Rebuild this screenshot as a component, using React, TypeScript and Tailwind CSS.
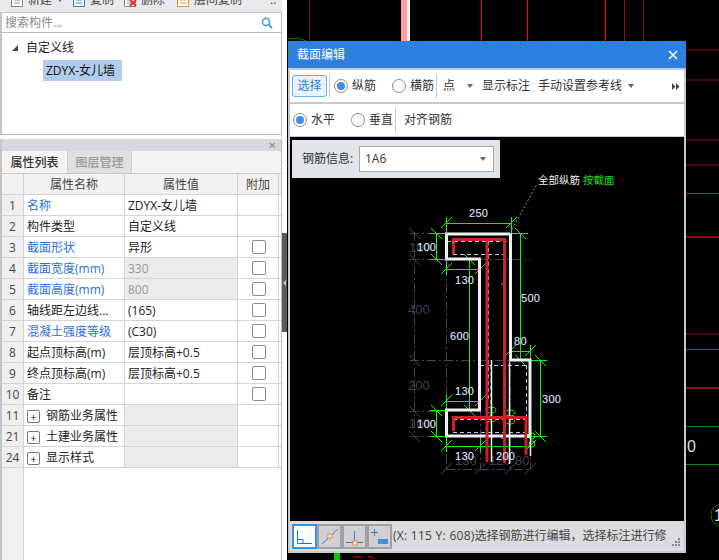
const uiFont = { fontFamily: '"Open Sans", "Noto Sans CJK SC", sans-serif' };

type Row = {
  no: string;
  name: string;
  value?: string;
  blue?: boolean;
  greyed?: boolean;
  check?: boolean;
  group?: boolean;
};

const rows: Row[] = [
  { no: "1", name: "名称", value: "ZDYX-女儿墙", blue: true },
  { no: "2", name: "构件类型", value: "自定义线" },
  { no: "3", name: "截面形状", value: "异形", blue: true, check: true },
  { no: "4", name: "截面宽度(mm)", value: "330", blue: true, greyed: true, check: true },
  { no: "5", name: "截面高度(mm)", value: "800", blue: true, greyed: true, check: true },
  { no: "6", name: "轴线距左边线...", value: "(165)", check: true },
  { no: "7", name: "混凝土强度等级", value: "(C30)", blue: true, check: true },
  { no: "8", name: "起点顶标高(m)", value: "层顶标高+0.5", check: true },
  { no: "9", name: "终点顶标高(m)", value: "层顶标高+0.5", check: true },
  { no: "10", name: "备注", check: true },
  { no: "11", name: "钢筋业务属性", group: true },
  { no: "21", name: "土建业务属性", group: true },
  { no: "24", name: "显示样式", group: true },
];

function Radio({ on }: { on?: boolean }) {
  return (
    <span className="w-[14px] h-[14px] rounded-full border border-[#8a8a8a] bg-white flex items-center justify-center shrink-0">
      {on && <span className="w-[8px] h-[8px] rounded-full bg-[#3d8ee8]" />}
    </span>
  );
}

function Caret({ className = "" }: { className?: string }) {
  return <span className={`w-0 h-0 border-x-[3px] border-x-transparent border-t-[4px] border-t-[#666] shrink-0 ${className}`} />;
}

function TopTool({ color, cross, w, label }: { color: string; cross?: boolean; w: number; label: string }) {
  return (
    <div className="flex items-center shrink-0" style={{ width: w }}>
      <svg width="14" height="18" viewBox="0 0 14 18" fill="none" className="shrink-0">
        <rect x="1.5" y="1.5" width="11" height="14" stroke={color} fill="#fff" />
        <path d="M4 6h6M4 9h6M4 12h6" stroke={color} />
        {cross && <path d="M7 9l6 6M13 9l-6 6" stroke="#d33" strokeWidth="2" />}
      </svg>
      <span className="ml-[4px] text-[#444]">{label}</span>
    </div>
  );
}

function PropertyRow({ row }: { row: Row }) {
  return (
    <div className="grid grid-cols-[22px_101px_113px_41px] h-[21px] border-b border-[#d4d4d4] text-[12px] leading-[18px]">
      <div className="bg-[#efefef] border-r border-[#d4d4d4] text-center text-[#444] pt-[2px]">{row.no}</div>
      <div className={`border-r border-[#d4d4d4] pl-[3px] pt-[2px] whitespace-nowrap overflow-hidden flex items-center ${row.blue ? "text-[#2f6fdd]" : "text-[#222]"}`}>
        {row.group && (
          <span className="w-[13px] h-[13px] border border-[#777] rounded-[2px] flex items-center justify-center text-[11px] leading-none mr-[6px] shrink-0">
            +
          </span>
        )}
        {row.name}
      </div>
      <div className={`border-r border-[#d4d4d4] pl-[3px] pt-[2px] whitespace-nowrap ${row.greyed ? "bg-[#ebebeb] text-[#999]" : row.group ? "bg-[#ebebeb]" : "text-[#222]"}`}>
        {row.value}
      </div>
      <div className="border-r border-[#d4d4d4] flex items-center justify-center pl-px">
        {row.check && <span className="w-[14px] h-[14px] border border-[#8c8c8c] rounded-[2px] bg-white" />}
      </div>
    </div>
  );
}

function LeftPanel() {
  return (
    <div className="w-[287px] shrink-0 h-[560px] bg-white flex flex-col text-[12px] text-[#222] relative">
      {/* toolbar, cut off by the top of the window */}
      <div className="h-[12px] bg-[#e9e9ec] overflow-hidden mr-[5px]">
        <div className="-mt-[10px] h-[19px] pl-[10px] flex items-center">
          <TopTool color="#888" w={47} label="新建" />
          <Caret className="mr-[9px]" />
          <TopTool color="#3b7fc4" w={51} label="复制" />
          <TopTool color="#888" cross w={53} label="删除" />
          <TopTool color="#e08a3c" w={70} label="层间复制" />
          <span className="ml-[24px] text-[#444]">..</span>
        </div>
      </div>
      <div className="w-[282px] border-l-2 border-[#c4c4c4]">
        <div className="h-[20px] flex items-center justify-between pl-[3px] pr-[8px] text-[#8a8a8a] border-r border-[#bbb] border-t border-t-[#c4c4c4]">
          <span>搜索构件...</span>
          <svg width="12" height="12" viewBox="0 0 12 12" fill="none">
            <circle cx="5" cy="5" r="3.6" stroke="#4a9fd6" strokeWidth="1.6" />
            <path d="M7.8 7.8L11 11" stroke="#4a9fd6" strokeWidth="2" />
          </svg>
        </div>
        <div className="h-[103px] border-t border-b border-r border-[#b8b8b8] pt-[5px]">
          <div className="flex items-center h-[20px] pl-[10px]">
            <span className="w-0 h-0 border-l-[6px] border-l-transparent border-b-[6px] border-b-[#444] mr-[8px]" />
            <span>自定义线</span>
          </div>
          <div className="ml-[41px] mt-[2px] w-[79px] h-[21px] bg-[#b0cdee] text-[#111] pl-[3px] leading-[21px] whitespace-nowrap">
            ZDYX-女儿墙
          </div>
        </div>
      </div>

      <div className="h-[4px]" />

      <div className="w-[282px] flex-1 flex flex-col border-l-2 border-l-[#c4c4c4] border-r border-r-[#bbb]">
        <div className="h-[12px] bg-[#d8d8dc] flex items-center justify-end pr-[5px] text-[#888] text-[10px] leading-none">✕</div>
        <div className="h-[23px] bg-[#f4f4f4] flex border-b border-[#c8c8c8]">
          <div className="w-[65px] text-center leading-[24px] font-medium text-[#333]">属性列表</div>
          <div className="w-[65px] text-center leading-[24px] bg-[#e0e0e0] text-[#999] font-medium border-x border-[#cfcfcf]">图层管理</div>
        </div>
        <div className="grid grid-cols-[22px_101px_113px_41px] h-[21px] border-b border-[#d4d4d4] text-[12px] leading-[18px] text-[#444] text-center bg-[#f2f2f2]">
          <div className="border-r border-[#d4d4d4]" />
          <div className="border-r border-[#d4d4d4] pt-[2px]">属性名称</div>
          <div className="border-r border-[#d4d4d4] pt-[2px]">属性值</div>
          <div className="border-r border-[#d4d4d4] pt-[2px]">附加</div>
        </div>
        {rows.map((r) => (
          <PropertyRow key={r.no} row={r} />
        ))}
        <div className="flex-1">
          <div className="w-[22px] h-full bg-[#efefef] border-r border-[#d4d4d4]" />
        </div>
      </div>

      {/* splitter handle */}
      <div className="absolute right-0 top-[233px] w-[5px] h-[99px] bg-[#5a5a5a] flex items-center justify-center">
        <span className="w-0 h-0 border-y-[3px] border-y-transparent border-r-[3px] border-r-[#ccc]" />
      </div>
    </div>
  );
}

function Backdrop() {
  return (
    <svg className="absolute inset-0" width="432" height="560" viewBox="287 0 432 560" fill="none">
      <g stroke="#8c0f0f">
        <path d="M309.5 0V41M624.5 0V41M643.5 0V41" />
        <path d="M686 50H719M686 80H719M686 140H719M686 165H719M686 334H719" />
        <path d="M686 237H719M686 388H719" strokeWidth="2" />
      </g>
      <g stroke="#ff0000">
        <path d="M481.5 0V41M527.5 0V41M605.5 0V41" />
        <path d="M686 193.5H719M686 349.5H719M287 139.5H288M287 165.5H288" />
      </g>
      <rect x="401" y="0" width="6" height="41" fill="#ff9c9c" />
      <rect x="407" y="0" width="3" height="41" fill="#ffffff" />
      <path d="M686 426.5H719M686 464.5H719" stroke="#0d8a0d" />
      <path d="M288 39L298 38L306 41" stroke="#0a7a0a" />
      <circle cx="722" cy="515" r="11" stroke="#0a7a0a" />
      <text x="687" y="452" fill="#ddd" fontSize="16" fontFamily="Liberation Sans">0</text>
      <text x="714" y="521" fill="#ddd" fontSize="16" fontFamily="Liberation Sans">1</text>
      <rect x="334" y="553" width="6" height="7" fill="#12c012" />
      <path d="M353 557H362M368 556L374 559" stroke="#ff0000" />
    </svg>
  );
}

function Tick({ x, y, back }: { x: number; y: number; back?: boolean }) {
  return back ? <path d={`M${x - 5} ${y - 5}L${x + 6} ${y + 6}`} /> : <path d={`M${x - 5} ${y + 5}L${x + 6} ${y - 6}`} />;
}

function Label({ x, y, t, fill = "#f2f2f2" }: { x: number; y: number; t: string; fill?: string }) {
  return (
    <text x={x} y={y} fill={fill} fontSize="11" fontFamily="Liberation Sans" stroke="#7fb2ff" strokeWidth="0.15" letterSpacing="0.3">
      {t}
    </text>
  );
}

function SectionDrawing() {
  const hTicks = [
    [446, 223], [511, 223], [446, 269], [480, 269], [446, 401], [480, 401],
    [510, 351], [530, 351], [446, 446], [480, 446], [530, 446],
  ];
  const vTicks = [
    [436, 233], [436, 259], [520, 233], [520, 360], [469, 259], [469, 410],
    [540, 360], [540, 436], [436, 410], [436, 436],
  ];
  return (
    <svg className="absolute inset-0" width="394" height="384" viewBox="290 137 394 384" fill="none">
      {/* grey outer dimensions */}
      <g stroke="#3f4650" strokeDasharray="9 3 2 3">
        <path d="M414.5 232V437M410 233.5H446M410 259.5H530M410 360.5H530M410 411.5H446M410 436.5H446" />
        <path d="M446.5 233V470M480.5 259V470M510.5 233V470M530.5 360V470M446 469.5H530" />
      </g>
      <g stroke="#3f4650">
        <Tick x={414} y={233} back />
        <Tick x={414} y={259} back />
        <Tick x={414} y={360} back />
        <Tick x={414} y={411} back />
        <Tick x={414} y={436} back />
        <Tick x={446} y={469} />
        <Tick x={480} y={469} />
        <Tick x={510} y={469} />
        <Tick x={530} y={469} />
      </g>
      <g fill="#3f4650" fontSize="13" fontFamily="Liberation Sans">
        <text x="409" y="252">100</text>
        <text x="408" y="314">400</text>
        <text x="408" y="390">200</text>
        <text x="409" y="428">100</text>
        <text x="455" y="465">130</text>
        <text x="489" y="465">120</text>
        <text x="515" y="465">80</text>
      </g>

      {/* light blue dashed inner lines */}
      <g stroke="#b6cdf0" strokeDasharray="4 3">
        <path d="M447 241.5H510M453 254.5H510M488.5 241V400M503.5 241V360" />
        <path d="M480 365.5H527M526.5 365V417M453 419.5H527M453 432.5H527M491 365V417" />
      </g>

      {/* green dimensions */}
      <g stroke="#14f014">
        <path d="M446 223.5H511M446.5 217V233M511.5 217V233" />
        <path d="M436.5 233V259M430 233.5H446M430 259.5H446" />
        <path d="M446 269.5H480M446.5 259V275M480.5 259V275" />
        <path d="M520.5 233V360M511 233.5H528" />
        <path d="M469.5 259V410M463 259.5H480M463 410.5H480" />
        <path d="M510 351.5H530M510.5 345V360M530.5 345V360" />
        <path d="M540.5 360V436M530 360.5H547M530 436.5H547" />
        <path d="M446 401.5H480M446.5 395V410M480.5 395V410" />
        <path d="M436.5 410V436M430 410.5H446M430 436.5H446" />
        <path d="M446 446.5H530M446.5 436V452M480.5 436V452M530.5 426V452" />
        {hTicks.map(([x, y]) => (
          <Tick key={`h${x}-${y}`} x={x} y={y} />
        ))}
        {vTicks.map(([x, y]) => (
          <Tick key={`v${x}-${y}`} x={x} y={y} back />
        ))}
        <ellipse cx="491" cy="410" rx="5" ry="3" />
        <ellipse cx="491" cy="419" rx="5" ry="3" />
        <ellipse cx="510" cy="413" rx="5" ry="3" />
        <ellipse cx="510" cy="421" rx="5" ry="3" />
        <ellipse cx="532" cy="436" rx="3" ry="3" />
        <ellipse cx="532" cy="444" rx="3" ry="3" />
      </g>

      {/* white section outline */}
      <g stroke="#f0f0f0" strokeWidth="3">
        <path d="M510 234H446.5V259H479.5V410H446.5V436H530V360H510.5V233" />
      </g>
      <path d="M491.5 360V462M509.5 362V464M530.5 436V456" stroke="#f0f0f0" strokeWidth="1.5" />

      {/* rebars */}
      <g stroke="#cc2222" strokeWidth="3">
        <path d="M453.5 254V239.5H504.5V463" />
        <path d="M487 239V462" />
        <path d="M453.5 431V417.5H526V455" />
      </g>
      <rect x="527" y="434" width="4" height="4" fill="#fff" />
      <path d="M502 283v2M502 437v2M453 241v2" stroke="#e8c000" />

      {/* leader and note */}
      <path d="M512 229L537 184" stroke="#999" strokeDasharray="2 2" />
      <text x="538" y="184" fill="#eee" fontSize="10.5" fontFamily="Noto Sans CJK SC">全部纵筋</text>
      <text x="583" y="184" fill="#16e016" fontSize="10.5" fontFamily="Noto Sans CJK SC">按截面</text>

      <Label x={469} y={217} t="250" />
      <Label x={417} y={251} t="100" />
      <Label x={455} y={284} t="130" />
      <Label x={521} y={302} t="500" />
      <Label x={450} y={340} t="600" />
      <Label x={514} y={345} t="80" />
      <Label x={455} y={395} t="130" />
      <Label x={542} y={403} t="300" />
      <Label x={417} y={428} t="100" />
      <Label x={455} y={460} t="130" />
      <Label x={496} y={460} t="200" />
    </svg>
  );
}

function StatusButton({ active, children }: { active?: boolean; children: React.ReactNode }) {
  return (
    <div className={`w-[25px] h-[25px] border-2 flex items-center justify-center ${active ? "border-[#2f94f0] bg-white" : "border-[#a0a0a0] bg-[#d0d0d4]"}`}>
      <svg width="21" height="21" viewBox="0 0 21 21" fill="none">
        {children}
      </svg>
    </div>
  );
}

function Dialog() {
  return (
    <div className="absolute left-[1px] top-[41px] w-[398px] h-[512px] bg-[#c6c9cd] flex flex-col text-[12px] text-[#333]">
      <div className="h-[27px] bg-[#2e80e0] text-white flex items-center justify-between pl-[9px] pr-[8px] shrink-0">
        <span>截面编辑</span>
        <svg width="10" height="10" viewBox="0 0 10 10" fill="none">
          <path d="M1 1L9 9M9 1L1 9" stroke="#fff" strokeWidth="1.6" />
        </svg>
      </div>
      <div className="h-[32px] mt-[2px] mx-[2px] bg-white flex items-center pl-[2px] whitespace-nowrap">
        <div className="w-[35px] h-[22px] border border-[#6aaeef] rounded-[3px] bg-[#e8f3ff] text-[#2c7fd0] text-center leading-[20px]">选择</div>
        <div className="w-px h-[24px] bg-[#c6c9cd] ml-[2px] mr-[4px]" />
        <Radio on />
        <span className="ml-[4px] w-[40px]">纵筋</span>
        <Radio />
        <span className="ml-[4px]">横筋</span>
        <div className="w-px h-[24px] bg-[#c6c9cd] ml-[2px] mr-[3px]" />
        <span className="w-[25px] pl-[3px]">点</span>
        <Caret className="ml-[2px] mr-[5px]" />
        <span className="px-[4px]">显示标注</span>
        <span className="ml-[4px]">手动设置参考线</span>
        <Caret className="ml-[6px]" />
        <svg className="ml-auto mr-[4px]" width="8" height="7" viewBox="0 0 8 7" fill="#444">
          <path d="M0 0L3.5 3.5L0 7ZM4 0L7.5 3.5L4 7Z" />
        </svg>
      </div>
      <div className="h-[32px] mt-[2px] mx-[2px] bg-white flex items-center pl-[3px] whitespace-nowrap">
        <Radio on />
        <span className="ml-[4px] w-[40px]">水平</span>
        <Radio />
        <span className="ml-[4px]">垂直</span>
        <div className="w-px h-[24px] bg-[#c6c9cd] ml-[2px] mr-[4px]" />
        <span className="px-[4px]">对齐钢筋</span>
      </div>
      <div className="h-[384px] mt-px mx-[2px] bg-black relative">
        <SectionDrawing />
        <div className="absolute left-[2px] top-[3px] w-[208px] h-[38px] bg-[#dfe5e8] flex items-center pl-[10px]">
          <span className="w-[57px]">钢筋信息:</span>
          <div className="w-[135px] h-[26px] border border-[#a8a8a8] bg-white flex items-center justify-between pl-[5px] pr-[7px]">
            <span>1A6</span>
            <Caret />
          </div>
        </div>
      </div>
      <div className="flex-1 mx-[2px] mb-[2px] bg-[#dcdcde] flex items-center pl-[2px] relative whitespace-nowrap">
        <StatusButton active>
          <path d="M3.5 4V17.5H18M3.5 13.5H9V17.5" stroke="#2a6fb8" />
        </StatusButton>
        <StatusButton>
          <path d="M3 18L19 3" stroke="#3a7fc4" />
          <rect x="9" y="8" width="4" height="4" fill="#fff" stroke="#e8842c" />
        </StatusButton>
        <StatusButton>
          <path d="M2 16.5H19M10.5 5V16" stroke="#3a7fc4" />
          <rect x="9" y="15" width="4" height="4" fill="#fff" stroke="#e8842c" />
        </StatusButton>
        <StatusButton>
          <path d="M2 6.5H9M5.5 3V10" stroke="#3a7fc4" />
          <rect x="9" y="13" width="10" height="5" fill="#4a90d9" />
        </StatusButton>
        <span className="ml-px w-[273px] overflow-hidden text-[#444]">
          <span className="tracking-[0.27px]">(X: 115 Y: 608)</span>选择钢筋进行编辑，选择标注进行修改
        </span>
        <svg className="absolute right-[3px] bottom-[5px]" width="9" height="8" viewBox="0 0 9 8" fill="#888">
          <rect x="6" y="0" width="2" height="2" />
          <rect x="3" y="3" width="2" height="2" />
          <rect x="6" y="3" width="2" height="2" />
          <rect x="0" y="6" width="2" height="2" />
          <rect x="3" y="6" width="2" height="2" />
          <rect x="6" y="6" width="2" height="2" />
        </svg>
      </div>
    </div>
  );
}

export default function App() {
  return (
    <div className="w-[719px] h-[560px] flex overflow-hidden bg-black" style={uiFont}>
      <LeftPanel />
      <div className="relative flex-1">
        <Backdrop />
        <Dialog />
      </div>
    </div>
  );
}
